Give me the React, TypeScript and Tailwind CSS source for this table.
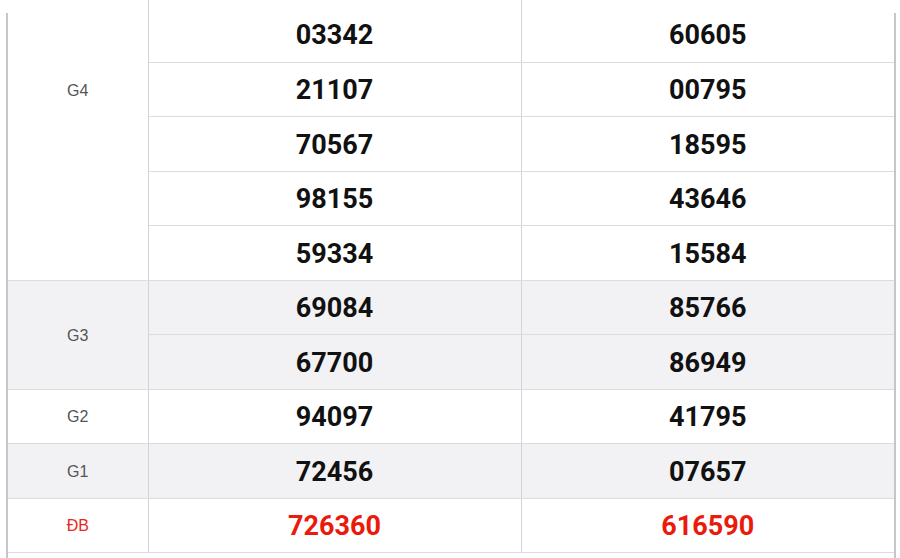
import React from 'react';

type Row = { label: string; left: string[]; right: string[]; shaded: boolean; special?: boolean };

const rows: Row[] = [
  { label: 'G4', left: ['03342', '21107', '70567', '98155', '59334'], right: ['60605', '00795', '18595', '43646', '15584'], shaded: false },
  { label: 'G3', left: ['69084', '67700'], right: ['85766', '86949'], shaded: true },
  { label: 'G2', left: ['94097'], right: ['41795'], shaded: false },
  { label: 'G1', left: ['72456'], right: ['07657'], shaded: true },
  { label: 'ĐB', left: ['726360'], right: ['616590'], shaded: false, special: true },
];

export default function App() {
  return (
    <div className="relative w-[900px] h-[558px] overflow-hidden bg-white">
      <div className="ml-[8px] w-[886px]">
        <table className="w-full border-collapse table-fixed">
          <colgroup>
            <col className="w-[140px]" />
            <col />
            <col />
          </colgroup>
          <tbody>
            {rows.map((group, g) =>
              group.left.map((num, i) => {
                const first = g === 0 && i === 0;
                const bg = group.shaded ? 'bg-[#f2f1f4]' : 'bg-white';
                const numColor = group.special ? 'text-[#ea1a0c]' : 'text-[#111111]';
                const pad = first ? 'pt-[9px]' : 'pt-[2px]';
                return (
                  <tr key={group.label + i} className={`${first ? 'h-[62px]' : 'h-[54.5px]'} ${bg}`}>
                    {i === 0 && (
                      <td
                        rowSpan={group.left.length}
                        className={`border-b border-r border-b-[#dcdbe0] border-r-[#d3d2d8] text-center text-[16px] font-['Liberation_Sans',Arial,sans-serif] ${
                          g === 0 ? 'align-top pt-[79px]' : 'align-middle pt-[2px]'
                        } ${group.special ? 'text-[#e8281c]' : 'text-[#555555]'}`}
                      >
                        {group.label}
                      </td>
                    )}
                    <td
                      className={`border-b border-r border-b-[#dcdbe0] border-r-[#d3d2d8] text-center align-middle text-[27px] font-bold font-['Roboto',sans-serif] ${pad} ${numColor}`}
                    >
                      {num}
                    </td>
                    <td
                      className={`border-b border-b-[#dcdbe0] text-center align-middle text-[27px] font-bold font-['Roboto',sans-serif] ${pad} ${numColor}`}
                    >
                      {group.right[i]}
                    </td>
                  </tr>
                );
              })
            )}
          </tbody>
        </table>
      </div>
      {/* frame edges of the results card */}
      <div className="absolute left-[6px] top-[13px] bottom-0 w-[2px] bg-[#c6c5ca]" />
      <div className="absolute left-[894px] top-[13px] bottom-0 w-[2px] bg-[#c6c5ca]" />
    </div>
  );
}
